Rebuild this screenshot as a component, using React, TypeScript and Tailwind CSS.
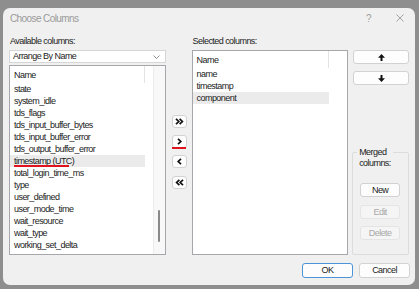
import type { ReactNode } from 'react';

const available = [
  'state',
  'system_idle',
  'tds_flags',
  'tds_input_buffer_bytes',
  'tds_input_buffer_error',
  'tds_output_buffer_error',
  'timestamp (UTC)',
  'total_login_time_ms',
  'type',
  'user_defined',
  'user_mode_time',
  'wait_resource',
  'wait_type',
  'working_set_delta',
];

const selected = ['name', 'timestamp', 'component'];

function Btn({
  children,
  disabled,
  primary,
  className = '',
}: {
  children: ReactNode;
  disabled?: boolean;
  primary?: boolean;
  className?: string;
}) {
  const tone = disabled
    ? 'bg-[#f5f5f5] border-[#e4e4e4] text-[#a8a8a8]'
    : primary
      ? 'bg-[#fdfdfd] border-[#4c94d8] text-[#1b1b1b]'
      : 'bg-[#fdfdfd] border-[#d2d2d2] text-[#1b1b1b]';
  return (
    <div
      className={`flex items-center justify-center rounded-[3px] border leading-none ${tone} ${className}`}
    >
      {children}
    </div>
  );
}

function Chevrons({ dir, double }: { dir: 'l' | 'r'; double?: boolean }) {
  const flip = dir === 'l' ? 'scale(-1,1) translate(-9,0)' : undefined;
  return (
    <svg width="9" height="7" viewBox="0 0 9 7">
      <g transform={flip} fill="none" stroke="#111" strokeWidth="1.7" strokeLinejoin="miter">
        {double ? (
          <>
            <path d="M1 0.8 L3.8 3.5 L1 6.2" />
            <path d="M4.6 0.8 L7.4 3.5 L4.6 6.2" />
          </>
        ) : (
          <path d="M3 0.8 L5.8 3.5 L3 6.2" />
        )}
      </g>
    </svg>
  );
}

function Arrow({ down }: { down?: boolean }) {
  return (
    <svg width="7" height="7" viewBox="0 0 7 7">
      <path
        d="M3.5 0 L7 3.8 H4.5 V7 H2.5 V3.8 H0 Z"
        fill="#111"
        transform={down ? 'rotate(180 3.5 3.5)' : undefined}
      />
    </svg>
  );
}

export default function App() {
  return (
    <div
      className="w-[419px] h-[289px] bg-[#8e8e8e] pt-[8px] pl-[3px] overflow-hidden text-[9px] tracking-[-0.55px] text-[#1b1b1b]"
      style={{ fontFamily: '"Liberation Sans", Arial, sans-serif' }}
    >
      <div className="w-[412px] h-[277px] rounded-[7px] bg-[#f0f0f0] flex flex-col">
        {/* title bar */}
        <div className="h-[20px] flex items-center pl-[7px] pr-[11px]">
          <span className="text-[10px] tracking-[-0.6px] text-[#9a9a9a]">Choose Columns</span>
          <span className="ml-auto text-[10px] text-[#a0a0a0]">?</span>
          <svg className="ml-[25px]" width="8" height="8" viewBox="0 0 8 8">
            <path d="M0.5 0.5 L7.5 7.5 M7.5 0.5 L0.5 7.5" stroke="#9a9a9a" strokeWidth="0.9" />
          </svg>
        </div>

        {/* body */}
        <div className="flex px-[6px] pt-[7px]">
          {/* available */}
          <div className="w-[157px] flex flex-col">
            <div className="h-[12px] leading-[12px] mb-[3px] pl-[1px]">Available columns:</div>
            <div className="h-[13px] bg-white border border-[#d6d6d6] flex items-center pl-[3px] pr-[5px]">
              <span>Arrange By Name</span>
              <svg className="ml-auto" width="7" height="4" viewBox="0 0 7 4">
                <path d="M0.5 0.5 L3.5 3.5 L6.5 0.5" fill="none" stroke="#777" strokeWidth="0.8" />
              </svg>
            </div>
            <div className="mt-[2px] h-[190px] bg-white border border-[#a6a6ab] flex">
              <div className="flex-1 flex flex-col">
                <div className="h-[17px] w-[135px] border-r border-[#e3e3e3] flex items-center pl-[4px] pt-[2px]">
                  Name
                </div>
                {available.map((a) => (
                  <div
                    key={a}
                    className={`relative h-[12px] leading-[12px] w-[135px] pl-[4px] ${
                      a === 'timestamp (UTC)' ? 'bg-[#ebebeb]' : ''
                    }`}
                  >
                    {a}
                    {a === 'timestamp (UTC)' && (
                      <div className="absolute left-[4px] bottom-0 w-[55px] h-[2px] bg-[#e0141e]" />
                    )}
                  </div>
                ))}
              </div>
              <div className="w-[12px] bg-[#f8f8f8] border-l border-[#ececec] flex justify-center">
                <div className="mt-[144px] w-[2px] h-[32px] rounded-full bg-[#8a8a8a]" />
              </div>
            </div>
          </div>

          {/* move buttons */}
          <div className="ml-[6px] w-[15px] pt-[80px] flex flex-col gap-[7px]">
            <Btn className="h-[13px]">
              <Chevrons dir="r" double />
            </Btn>
            <div className="relative">
              <Btn className="h-[13px]">
                <Chevrons dir="r" />
              </Btn>
              <div className="absolute left-0 bottom-[-1px] w-[14px] h-[2px] bg-[#e0141e]" />
            </div>
            <Btn className="h-[13px]">
              <Chevrons dir="l" />
            </Btn>
            <Btn className="h-[13px] mt-[1px]">
              <Chevrons dir="l" double />
            </Btn>
          </div>

          {/* selected */}
          <div className="ml-[5px] w-[157px] flex flex-col">
            <div className="h-[12px] leading-[12px] mb-[3px] pl-[1px]">Selected columns:</div>
            <div className="h-[205px] bg-white border border-[#a6a6ab] flex flex-col">
              <div className="h-[17px] w-[136px] border-r border-[#e3e3e3] flex items-center pl-[4px] pt-[2px]">
                Name
              </div>
              {selected.map((s) => (
                <div
                  key={s}
                  className={`h-[12px] leading-[12px] w-[136px] pl-[4px] ${
                    s === 'component' ? 'bg-[#ebebeb]' : ''
                  }`}
                >
                  {s}
                </div>
              ))}
            </div>
          </div>

          {/* order + merged */}
          <div className="ml-[5px] w-[56px] pt-[15px] flex flex-col">
            <Btn className="h-[14px]">
              <Arrow />
            </Btn>
            <Btn className="h-[14px] mt-[7px]">
              <Arrow down />
            </Btn>
            <div className="relative mt-[67px] h-[103px] border border-[#dcdcdc] rounded-[2px] -ml-[1px] pl-[7px] pt-[30px] flex flex-col">
              <div className="absolute left-[4px] top-[-6px] px-[2px] bg-[#f0f0f0] leading-[11px]">
                Merged
                <br />
                columns:
              </div>
              <Btn className="w-[40px] h-[14px]">New</Btn>
              <Btn disabled className="w-[40px] h-[14px] mt-[8px]">
                Edit
              </Btn>
              <Btn disabled className="w-[40px] h-[14px] mt-[7px]">
                Delete
              </Btn>
            </div>
          </div>
        </div>

        {/* footer */}
        <div className="mt-[8px] flex justify-end gap-[6px] pr-[5px]">
          <Btn primary className="w-[51px] h-[15px]">
            OK
          </Btn>
          <Btn className="w-[51px] h-[15px]">Cancel</Btn>
        </div>
      </div>
    </div>
  );
}
